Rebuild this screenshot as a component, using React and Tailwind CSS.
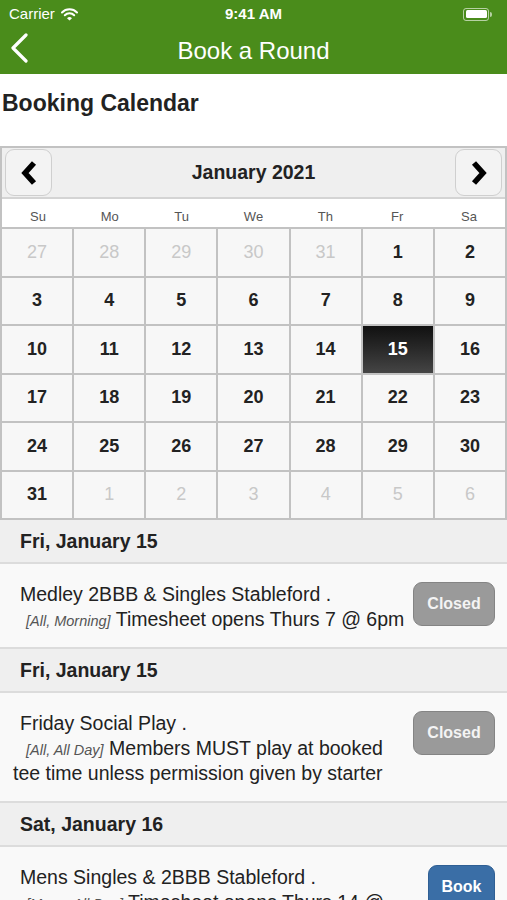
const weeks = [
  [27, 28, 29, 30, 31, 1, 2],
  [3, 4, 5, 6, 7, 8, 9],
  [10, 11, 12, 13, 14, 15, 16],
  [17, 18, 19, 20, 21, 22, 23],
  [24, 25, 26, 27, 28, 29, 30],
  [31, 1, 2, 3, 4, 5, 6],
];

const dayNames = ["Su", "Mo", "Tu", "We", "Th", "Fr", "Sa"];

const events = [
  {
    date: "Fri, January 15",
    title: "Medley 2BBB & Singles Stableford .",
    tag: "[All, Morning]",
    note: "Timesheet opens Thurs 7 @ 6pm",
    status: "closed",
  },
  {
    date: "Fri, January 15",
    title: "Friday Social Play .",
    tag: "[All, All Day]",
    note: "Members MUST play at booked tee time unless permission given by starter",
    status: "closed",
  },
  {
    date: "Sat, January 16",
    title: "Mens Singles & 2BBB Stableford .",
    tag: "[Mens, All Day]",
    note: "Timesheet opens Thurs 14 @ 6pm",
    status: "book",
  },
];

const Chevron = ({ dir }) => (
  <svg width="18" height="26" viewBox="0 0 18 26">
    <polyline
      points={dir === "left" ? "14,3 5,13 14,23" : "4,3 13,13 4,23"}
      fill="none"
      stroke="#000"
      strokeWidth="5.5"
      strokeLinejoin="miter"
    />
  </svg>
);

const App = () => {
  return (
    <div className="w-[507px] h-[900px] overflow-hidden bg-white font-['Liberation_Sans',Arial,sans-serif]">
      <div className="bg-[#4a8c1b] text-white">
        <div className="relative flex h-[28px] items-center px-[9px] text-[15px]">
          <span>Carrier</span>
          <svg className="ml-[6px]" width="17" height="13" viewBox="0 0 17 13">
            <path d="M1 4.5 A10.5 10.5 0 0 1 16 4.5" fill="none" stroke="#fff" strokeWidth="2" strokeLinecap="round" />
            <path d="M3.8 7.2 A6.5 6.5 0 0 1 13.2 7.2" fill="none" stroke="#fff" strokeWidth="2" strokeLinecap="round" />
            <path d="M6 10.2 L8.5 12.5 L11 10.2 A3.5 3.5 0 0 0 6 10.2 Z" fill="#fff" />
          </svg>
          <span className="absolute left-1/2 -translate-x-1/2 font-bold">9:41 AM</span>
          <div className="ml-auto mr-[6px] flex items-center">
            <div className="flex h-[13px] w-[26px] items-center rounded-[3px] border border-white/60 p-[1.5px]">
              <div className="h-full w-full rounded-[1.5px] bg-white" />
            </div>
            <div className="ml-[1px] h-[5px] w-[2px] rounded-r-sm bg-white/60" />
          </div>
        </div>
        <div className="relative flex h-[46px] items-center justify-center">
          <svg className="absolute left-[9px] top-[5px]" width="20" height="30" viewBox="0 0 20 30">
            <polyline points="17,2 4,15 17,28" fill="none" stroke="#fff" strokeWidth="3.2" strokeLinecap="round" strokeLinejoin="round" />
          </svg>
          <span className="text-[24px]">Book a Round</span>
        </div>
      </div>

      <h1 className="h-[72px] pl-[2px] pt-[12px] text-[23px] font-bold text-[#222]">Booking Calendar</h1>

      <div className="border-x-2 border-t-2 border-[#c2c2c2]">
        <div className="flex h-[51px] items-center border-b-2 border-[#d4d4d4] bg-[#efefef] px-[3px]">
          <button className="flex h-[47px] w-[47px] items-center justify-center rounded-[9px] border border-[#cfcfcf] bg-[#f3f3f3]">
            <Chevron dir="left" />
          </button>
          <span className="flex-1 text-center text-[19.5px] font-bold text-[#222]">January 2021</span>
          <button className="flex h-[47px] w-[47px] items-center justify-center rounded-[9px] border border-[#cfcfcf] bg-[#f3f3f3]">
            <Chevron dir="right" />
          </button>
        </div>
        <div className="grid h-[28px] grid-cols-7 items-end bg-white pb-[1px] text-center text-[13px] text-[#555]">
          {dayNames.map((d) => (
            <span key={d}>{d}</span>
          ))}
        </div>
        <div className="grid grid-cols-7 gap-[2px] border-y-2 border-[#c2c2c2] bg-[#c2c2c2]">
          {weeks.map((week, wi) =>
            week.map((day, di) => {
              const muted = (wi === 0 && day > 20) || (wi === 5 && day < 10);
              const selected = wi === 2 && day === 15;
              return (
                <div
                  key={`${wi}-${di}`}
                  className={
                    selected
                      ? "flex h-[46.5px] items-center justify-center bg-gradient-to-b from-[#111] to-[#454545] text-[18px] font-bold text-white"
                      : muted
                      ? "flex h-[46.5px] items-center justify-center bg-[#f7f7f7] text-[18px] text-[#c8c8c8]"
                      : "flex h-[46.5px] items-center justify-center bg-[#f7f7f7] text-[18px] font-bold text-[#222]"
                  }
                >
                  {day}
                </div>
              );
            })
          )}
        </div>
      </div>

      <div>
        {events.map((ev, i) => (
          <div key={i}>
            <div className="flex h-[44px] items-center border-b-2 border-[#dcdcdc] bg-[#efefef] pl-[20px] pt-[2px] text-[19.5px] font-bold text-[#222]">
              {ev.date}
            </div>
            <div className="flex items-start border-b-2 border-[#dcdcdc] bg-[#f9f9f9] pt-[18px] pb-[15px] pr-[12px]">
              <div className="flex-1 text-[19.5px] leading-[25px] text-[#222]">
                <p className="pl-[20px]">{ev.title}</p>
                <p className="pl-[13px] indent-[13px]">
                  <span className="text-[14.5px] italic leading-none text-[#555]">{ev.tag}</span> {ev.note}
                </p>
              </div>
              <button
                className={
                  ev.status === "book"
                    ? "ml-[8px] h-[44px] w-[67px] rounded-[9px] border border-[#2f5f94] bg-[#3a6ea6] text-[16px] font-bold text-white"
                    : "ml-[8px] h-[44px] w-[82px] rounded-[9px] border border-[#848484] bg-[#9a9a9a] text-[16px] font-bold text-[#f4f4f4]"
                }
              >
                {ev.status === "book" ? "Book" : "Closed"}
              </button>
            </div>
          </div>
        ))}
      </div>
    </div>
  );
};

export default App;
